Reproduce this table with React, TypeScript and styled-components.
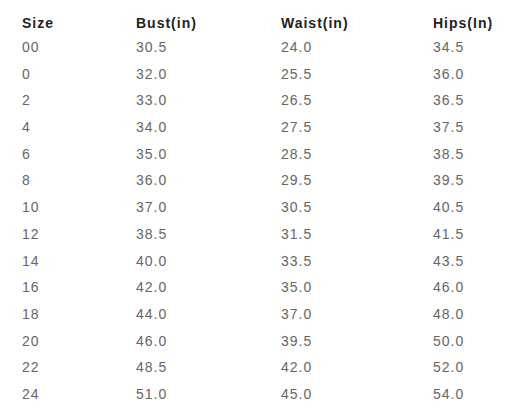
import React from "react";
import styled, { createGlobalStyle } from "styled-components";

const Global = createGlobalStyle`
  html, body { margin: 0; padding: 0; background: #fff; }
  body { font-family: "Liberation Sans", Arial, sans-serif; }
`;

const Table = styled.div`
  display: grid;
  grid-template-columns: 114px 145px 152px 1fr;
  padding: 12px 0 0 22px;
`;

const Head = styled.div`
  font-size: 14px;
  font-weight: 700;
  letter-spacing: 1px;
  color: #222;
  height: 22px;
  line-height: 22px;
`;

const Cell = styled.div`
  font-size: 14px;
  letter-spacing: 1px;
  color: #666;
  height: 26.7px;
  line-height: 26.7px;
`;

const rows: string[][] = [
  ["00", "30.5", "24.0", "34.5"],
  ["0", "32.0", "25.5", "36.0"],
  ["2", "33.0", "26.5", "36.5"],
  ["4", "34.0", "27.5", "37.5"],
  ["6", "35.0", "28.5", "38.5"],
  ["8", "36.0", "29.5", "39.5"],
  ["10", "37.0", "30.5", "40.5"],
  ["12", "38.5", "31.5", "41.5"],
  ["14", "40.0", "33.5", "43.5"],
  ["16", "42.0", "35.0", "46.0"],
  ["18", "44.0", "37.0", "48.0"],
  ["20", "46.0", "39.5", "50.0"],
  ["22", "48.5", "42.0", "52.0"],
  ["24", "51.0", "45.0", "54.0"],
];

const headers = ["Size", "Bust(in)", "Waist(in)", "Hips(In)"];

export default function App() {
  return (
    <>
      <Global />
      <Table>
        {headers.map((h) => (
          <Head key={h}>{h}</Head>
        ))}
        {rows.map((r, i) =>
          r.map((c, j) => <Cell key={`${i}-${j}`}>{c}</Cell>)
        )}
      </Table>
    </>
  );
}
